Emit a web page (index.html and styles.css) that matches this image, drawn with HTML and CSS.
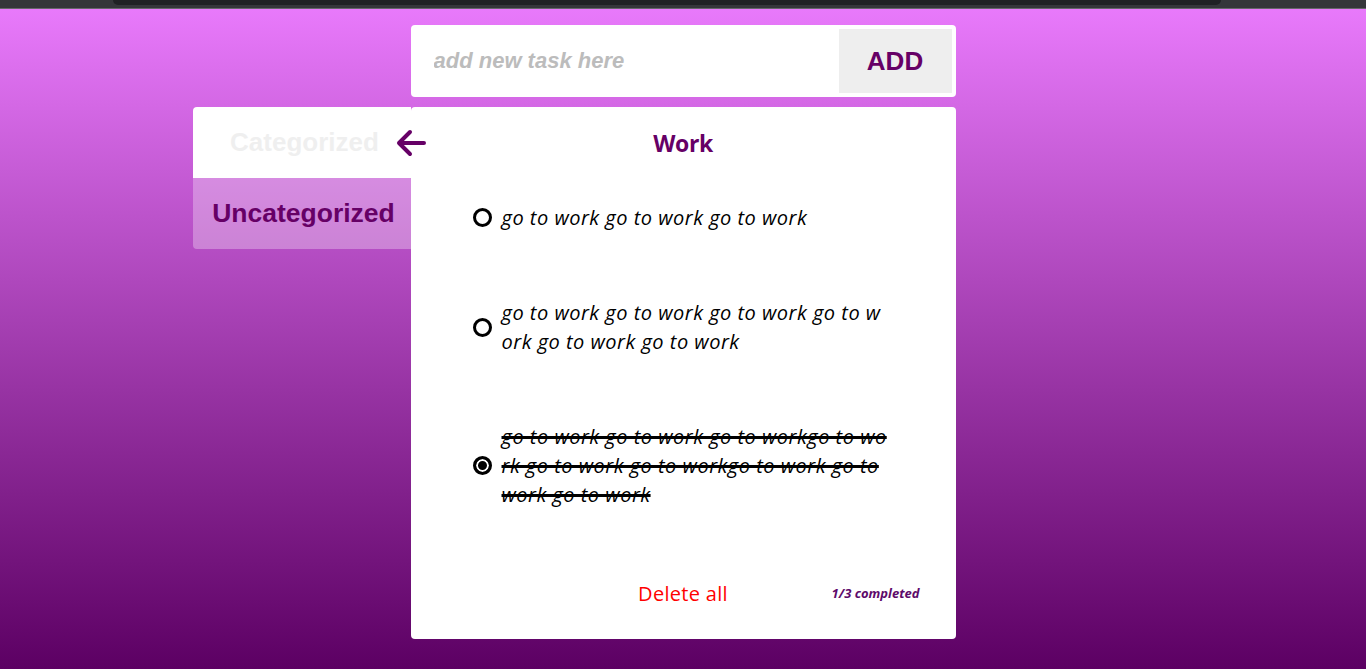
FILE: index.html
```html
<!DOCTYPE html>
<html lang="en">
<head>
<meta charset="utf-8">
<title>Todo</title>
<link rel="stylesheet" href="styles.css">
</head>
<body>
<div class="chrome"><div class="chrome-pill"></div></div>
<main class="page">
  <form class="add-form">
    <input class="add-input" type="text" placeholder="add new task here">
    <button class="add-btn" type="button">ADD</button>
  </form>
  <div class="layout">
    <nav class="tabs">
      <div class="tab tab-active">Categorized
        <svg class="back-arrow" width="32" height="28" viewBox="0 0 32 28"><path d="M4 14H29M15 3L4 14L15 25" fill="none" stroke="#660066" stroke-width="4" stroke-linecap="round" stroke-linejoin="round"/></svg>
      </div>
      <div class="tab tab-other">Uncategorized</div>
    </nav>
    <section class="card">
      <h1 class="card-title">Work</h1>
      <ul class="tasks">
        <li class="task"><span class="radio"></span><span class="task-text">go to work go to work go to work</span></li>
        <li class="task"><span class="radio"></span><span class="task-text">go to work go to work go to work go to work go to work go to work</span></li>
        <li class="task done"><span class="radio checked"></span><span class="task-text">go to work go to work go to workgo to work go to work go to workgo to work go to work go to work</span></li>
      </ul>
      <footer class="card-footer">
        <span class="delete-all">Delete all</span>
        <span class="count">1/3 completed</span>
      </footer>
    </section>
  </div>
</main>
</body>
</html>
```
FILE: styles.css
```css
* { box-sizing: border-box; }
html, body { margin: 0; padding: 0; height: 100%; }
body {
  font-family: "Open Sans", "Liberation Sans", sans-serif;
  background: linear-gradient(to bottom, #ea7bfd 0px, #5c0063 100%);
  overflow: hidden;
}
.chrome {
  height: 9px;
  background: #35363a;
  border-bottom: 1px solid #66666a;
  display: flex;
}
.chrome-pill {
  margin-left: 113px;
  width: 1108px;
  height: 5px;
  background: #202124;
  border-radius: 0 0 8px 8px;
}
.page {
  padding-top: 16px;
}
.add-form {
  width: 545px;
  height: 72px;
  margin: 0 auto;
  background: #fff;
  border-radius: 4px;
  display: flex;
  padding: 4px 4px 4px 0;
}
.add-input {
  flex: 1;
  border: none;
  outline: none;
  background: transparent;
  padding: 0 0 0 23px;
  font-family: "Liberation Sans", Arial, sans-serif;
  font-size: 22px;
  font-weight: bold;
  font-style: italic;
  color: #333;
}
.add-input::placeholder { color: #bcbcbc; }
.add-btn {
  width: 113px;
  border: none;
  background: #eeeeee;
  font-family: "Liberation Sans", Arial, sans-serif;
  font-size: 26px;
  font-weight: bold;
  color: #660066;
  padding: 0;
}
.layout {
  display: grid;
  grid-template-columns: 1fr 545px 1fr;
  margin-top: 10px;
}
.tabs {
  justify-self: end;
  align-self: start;
  width: 218px;
  border-radius: 4px 0 0 4px;
}
.tab {
  height: 71px;
  display: flex;
  align-items: center;
  justify-content: center;
  font-family: "Liberation Sans", Arial, sans-serif;
  font-size: 26px;
  font-weight: bold;
  position: relative;
}
.tab-active {
  background: #fff;
  color: #efefef;
  border-radius: 4px 0 0 0;
  padding-left: 6px;
}
.back-arrow {
  position: absolute;
  right: -16px;
  top: 22px;
}
.tab-other {
  background: rgba(255, 255, 255, 0.3);
  color: #660066;
  border-radius: 0 0 0 4px;
  font-size: 26.5px;
  padding-left: 4px;
}
.card {
  background: #fff;
  border-radius: 4px;
  height: 532px;
  display: flex;
  flex-direction: column;
  padding: 22px 36px 32px 62px;
}
.card-title {
  margin: 0 0 0 -26px;
  text-align: center;
  font-size: 23px;
  font-weight: 700;
  line-height: 28px;
  color: #660066;
  letter-spacing: -0.4px;
}
.tasks {
  list-style: none;
  margin: 46px 0 0;
  padding: 0;
  display: flex;
  flex-direction: column;
  gap: 66px;
}
.task {
  display: flex;
  align-items: center;
  gap: 10px;
}
.radio {
  flex: none;
  width: 19px;
  height: 19px;
  border: 3px solid #000;
  border-radius: 50%;
  background: #fff;
}
.radio.checked {
  background: #000;
  box-shadow: inset 0 0 0 2px #fff;
}
.task-text {
  width: 388px;
  font-size: 20px;
  letter-spacing: 0.5px;
  font-style: italic;
  line-height: 29px;
  color: #000;
  word-break: break-all;
}
.done .task-text {
  text-decoration: line-through;
  text-decoration-thickness: 3px;
}
.card-footer {
  margin-top: auto;
  display: grid;
  grid-template-columns: 1fr auto 1fr;
  align-items: center;
  margin-left: -26px;
  height: 28px;
}
.delete-all {
  grid-column: 2;
  color: #ff0000;
  font-size: 20px;
  letter-spacing: 0.3px;
}
.count {
  grid-column: 3;
  justify-self: end;
  font-size: 13px;
  font-weight: 700;
  font-style: italic;
  color: #5e0a6a;
}
```
